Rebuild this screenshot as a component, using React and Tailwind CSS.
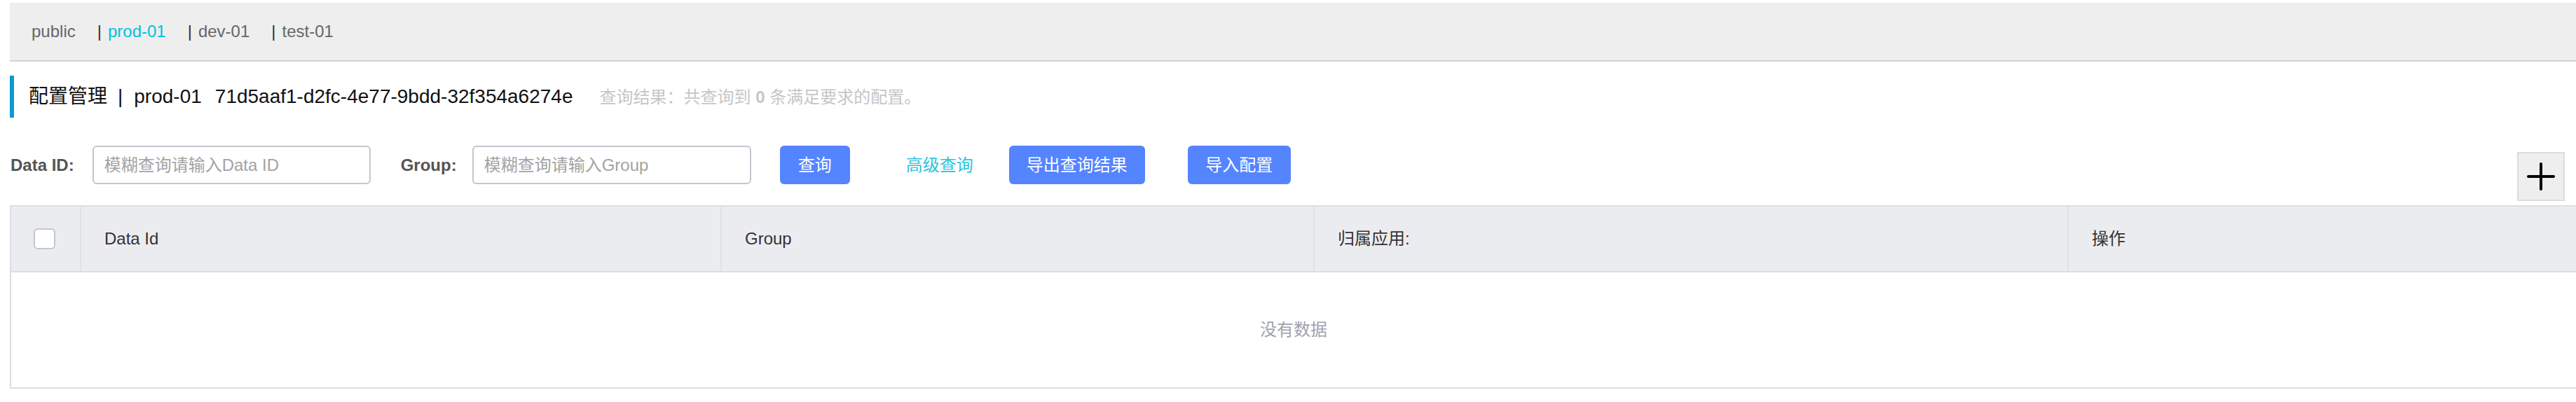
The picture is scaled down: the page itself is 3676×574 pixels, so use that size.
import React from 'react';

// Namespace tabs
const NamespaceBar = () => {
  const tabs = [
    { name: 'prod-01', active: true },
    { name: 'dev-01' },
    { name: 'test-01' },
  ];
  return (
    <div className="h-[84px] flex items-center bg-[#eeeeee] border-b-2 border-[#d2d2d2] pl-[31px] text-[24px] text-[#666]">
      <span>public</span>
      {tabs.map((t) => (
        <span key={t.name} className="ml-[31px] flex items-center">
          <span className="text-[#333]">|</span>
          <span className={`ml-[9px] ${t.active ? 'text-[#00c1de]' : 'text-[#666]'}`}>{t.name}</span>
        </span>
      ))}
    </div>
  );
};

// Page title with result count
const TitleRow = () => {
  return (
    <div className="mt-[20px] h-[60px] flex items-center border-l-[6px] border-[#0a9ad3] pl-[21px]">
      <div className="whitespace-nowrap">
        <span className="text-[28px] text-[#111]">配置管理</span>
        <span className="text-[28px] text-[#111] ml-[15px]">|</span>
        <span className="text-[28px] text-[#111] ml-[16px]">prod-01</span>
        <span className="text-[28px] text-[#111] ml-[19px]">71d5aaf1-d2fc-4e77-9bdd-32f354a6274e</span>
        <span className="text-[24px] text-[#c6c6c6] ml-[38px]">
          查询结果：共查询到 <strong className="font-bold">0</strong> 条满足要求的配置。
        </span>
      </div>
    </div>
  );
};

const BlueButton = ({ children, className }) => (
  <button className={`h-[55px] rounded-[6px] bg-[#5584ff] text-white text-[24px] flex items-center justify-center ${className}`}>
    {children}
  </button>
);

// Search form row
const FilterRow = () => {
  return (
    <div className="mt-[40px] flex items-start pl-[1px]">
      <span className="h-[55px] flex items-center font-bold text-[24px] text-[#555]">Data ID:</span>
      <input
        className="ml-[26px] w-[397px] h-[55px] rounded-[6px] border-2 border-[#c4c6cf] pl-[15px] text-[24px] outline-none placeholder:text-[#a3a3a3]"
        placeholder="模糊查询请输入Data ID"
      />
      <span className="ml-[43px] h-[55px] flex items-center font-bold text-[24px] text-[#555]">Group:</span>
      <input
        className="ml-[22px] w-[398px] h-[55px] rounded-[6px] border-2 border-[#c4c6cf] pl-[15px] text-[24px] outline-none placeholder:text-[#a3a3a3]"
        placeholder="模糊查询请输入Group"
      />
      <BlueButton className="ml-[41px] w-[100px]">查询</BlueButton>
      <span className="ml-[80px] h-[55px] flex items-center text-[24px] text-[#2fc3da]">高级查询</span>
      <BlueButton className="ml-[51px] w-[194px]">导出查询结果</BlueButton>
      <BlueButton className="ml-[61px] w-[147px]">导入配置</BlueButton>
      <button className="ml-auto mr-[16px] mt-[9px] w-[68px] h-[70px] bg-[#eeeeee] border-2 border-[#dcdcdc] flex items-center justify-center">
        <svg width="40" height="40" viewBox="0 0 40 40">
          <path d="M2 20H38M20 2V38" stroke="#000" strokeWidth="4" strokeLinecap="round" fill="none" />
        </svg>
      </button>
    </div>
  );
};

// Config table (empty)
const ConfigTable = () => {
  return (
    <div className="mt-[6px] border-t-2 border-b-2 border-l-2 border-[#dcdee3]">
      <div className="h-[94px] flex bg-[#ebecf0] border-b-2 border-[#dcdee3] text-[24px] text-[#333]">
        <div className="w-[98px] flex items-center pl-[32px]">
          <span className="w-[31px] h-[30px] rounded-[6px] border-2 border-[#c4c6cf] bg-white" />
        </div>
        <div className="w-[914px] flex items-center pl-[33px] border-l-2 border-[#dfe1e6]">Data Id</div>
        <div className="w-[846px] flex items-center pl-[33px] border-l-2 border-[#dfe1e6]">Group</div>
        <div className="w-[1076px] flex items-center pl-[33px] border-l-2 border-[#dfe1e6]">归属应用:</div>
        <div className="flex-1 flex items-center pl-[33px] border-l-2 border-[#dfe1e6]">操作</div>
      </div>
      <div className="h-[164px] flex items-center justify-center text-[24px] text-[#a0a2ad]">没有数据</div>
    </div>
  );
};

export default function App() {
  return (
    <div className="w-full h-[574px] bg-white pl-[14px] pt-[4px] overflow-hidden font-['Liberation_Sans','Noto_Sans_CJK_SC',sans-serif]">
      <NamespaceBar />
      <TitleRow />
      <FilterRow />
      <ConfigTable />
    </div>
  );
}
